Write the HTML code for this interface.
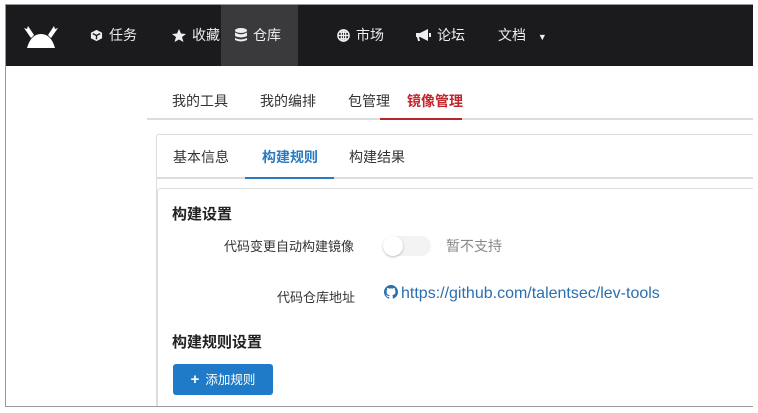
<!DOCTYPE html>
<html><head><meta charset="utf-8"><style>
*{box-sizing:border-box;margin:0;padding:0}
html,body{width:758px;height:413px;overflow:hidden}
body{background:#fff;font-family:"Liberation Sans","Noto Sans CJK SC",sans-serif;position:relative;color:#333}
.frame{position:absolute;left:5px;top:4px;width:748px;height:403px;border:1px solid #999;border-right:none;overflow:hidden}
.nav{position:absolute;left:0;top:0;width:747px;height:61px;background:#1b1b1d;color:#eee;font-size:14px}
.nav .it{position:absolute;top:0;height:61px;line-height:61px;white-space:nowrap}
.nav svg{vertical-align:-2px;margin-right:6px}
.a{position:absolute;white-space:nowrap}
</style></head><body>
<div class="frame">
<div class="nav">
 <svg style="position:absolute;left:17px;top:20px" width="36" height="23" viewBox="0 0 36 23"><path d="M1 3 L8 13 L11 10 L5 1 L4 4 Z M35 3 L28 13 L25 10 L31 1 L32 4 Z" fill="#fff"/><path d="M4 23 Q8 9 18 9 Q28 9 32 23 Z" fill="#fff"/></svg>
 <div class="it" style="left:84px"><svg width="13" height="13" viewBox="0 0 14 14"><path d="M7 1 L13 4 L13 10 L7 13 L1 10 L1 4 Z" fill="#eee"/><path d="M3 5 L7 7 L11 5 M7 7 V11" stroke="#1b1b1d" stroke-width="1.5" fill="none"/></svg>任务</div>
 <div class="it" style="left:166px"><svg width="14" height="13" viewBox="0 0 14 13"><path d="M7 0 L9 4.5 L14 5 L10 8 L11.5 13 L7 10.5 L2.5 13 L4 8 L0 5 L5 4.5 Z" fill="#eee"/></svg>收藏</div>
 <div class="it" style="left:215px;width:77px;background:#3a3a3c;padding-left:14px"><svg width="12" height="14" viewBox="0 0 12 14"><ellipse cx="6" cy="2.5" rx="6" ry="2.5" fill="#eee"/><path d="M0 4.5 Q6 8 12 4.5 V8 Q6 11 0 8 Z M0 10 Q6 13 12 10 V12 Q6 15 0 12Z" fill="#eee"/></svg>仓库</div>
 <div class="it" style="left:331px"><svg width="13" height="13" viewBox="0 0 14 14"><circle cx="7" cy="7" r="6" fill="none" stroke="#eee" stroke-width="1.6"/><path d="M1 7 H13 M7 1 V13 M3 3.5 H11 M3 10.5 H11" stroke="#eee" stroke-width="1.3"/><ellipse cx="7" cy="7" rx="2.5" ry="6" fill="none" stroke="#eee" stroke-width="1.3"/></svg>市场</div>
 <div class="it" style="left:410px"><svg width="15" height="13" viewBox="0 0 15 13"><path d="M0 4 H4 L12 0 V12 L4 8 H3 L4 12 H2 L1 8 H0 Z" fill="#eee"/><rect x="13" y="4" width="2" height="4" fill="#eee"/></svg>论坛</div>
 <div class="it" style="left:492px">文档 <span style="font-size:9px;margin-left:8px">▼</span></div>
</div>
<div class="a" style="left:166px;top:86px;font-size:14px">我的工具</div>
<div class="a" style="left:254px;top:86px;font-size:14px">我的编排</div>
<div class="a" style="left:342px;top:86px;font-size:14px">包管理</div>
<div class="a" style="left:401px;top:86px;font-size:14px;color:#c0272d;font-weight:bold">镜像管理</div>
<div class="a" style="left:141px;top:113px;width:610px;height:2px;background:#ddd"></div>
<div class="a" style="left:374px;top:113px;width:82px;height:2px;background:#b8262b"></div>
<div class="a" style="left:150px;top:129px;width:610px;height:280px;border:1px solid #ddd;border-radius:3px"></div>
<div class="a" style="left:167px;top:142px;font-size:14px">基本信息</div>
<div class="a" style="left:256px;top:142px;font-size:14px;color:#2a7bbf;font-weight:bold">构建规则</div>
<div class="a" style="left:343px;top:142px;font-size:14px">构建结果</div>
<div class="a" style="left:151px;top:172px;width:610px;height:2px;background:#ddd"></div>
<div class="a" style="left:239px;top:172px;width:89px;height:2px;background:#2a7bbf"></div>
<div class="a" style="left:151px;top:183px;width:610px;height:225px;border:1px solid #ddd;border-radius:3px"></div>
<div class="a" style="left:166px;top:198px;font-size:15px;font-weight:bold;color:#222">构建设置</div>
<div class="a" style="left:218px;top:231px;font-size:13px">代码变更自动构建镜像</div>
<div class="a" style="left:377px;top:231px;width:48px;height:20px;border-radius:10px;background:#f3f3f3"></div>
<div class="a" style="left:377px;top:231px;width:20px;height:20px;border-radius:10px;background:#fff;box-shadow:0 1px 2px rgba(0,0,0,.25)"></div>
<div class="a" style="left:440px;top:231px;font-size:14px;color:#888">暂不支持</div>
<div class="a" style="left:271px;top:282px;font-size:13px">代码仓库地址</div>
<div class="a" style="left:378px;top:280px;font-size:16px;color:#2a6fb0"><svg width="14" height="14" viewBox="0 0 16 16" style="vertical-align:-1px;margin-right:3px"><path fill="#2a6fb0" d="M8 0C3.6 0 0 3.6 0 8c0 3.5 2.3 6.5 5.5 7.6.4.1.5-.2.5-.4v-1.4c-2.2.5-2.7-1-2.7-1-.4-.9-.9-1.2-.9-1.2-.7-.5.1-.5.1-.5.8.1 1.2.8 1.2.8.7 1.2 1.9.9 2.3.7.1-.5.3-.9.5-1.1-1.8-.2-3.6-.9-3.6-4 0-.9.3-1.6.8-2.1-.1-.2-.4-1 .1-2.1 0 0 .7-.2 2.2.8.6-.2 1.3-.3 2-.3s1.4.1 2 .3c1.5-1 2.2-.8 2.2-.8.4 1.1.2 1.9.1 2.1.5.6.8 1.3.8 2.1 0 3.1-1.9 3.7-3.6 3.9.3.3.5.8.5 1.5v2.2c0 .2.1.5.6.4C13.7 14.5 16 11.5 16 8c0-4.4-3.6-8-8-8z"/></svg>https://github.com/talentsec/lev-tools</div>
<div class="a" style="left:166px;top:326px;font-size:15px;font-weight:bold;color:#222">构建规则设置</div>
<div class="a" style="left:167px;top:359px;width:100px;height:31px;background:#1f7bc7;border-radius:3px;color:#fff;font-size:12.5px;line-height:31px;text-align:center"><b style="font-size:15px;margin-right:6px">+</b>添加规则</div>
</div>
</body></html>
